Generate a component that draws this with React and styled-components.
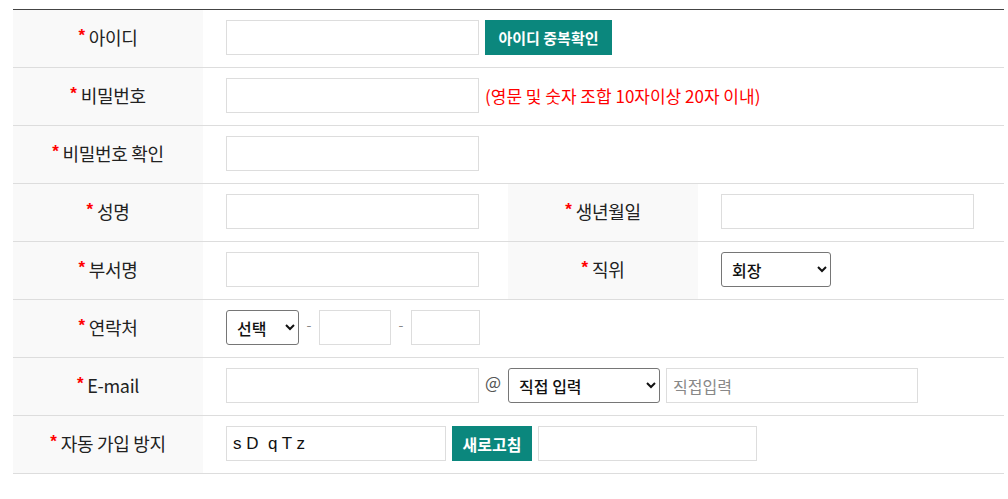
import React from "react";
import styled, { createGlobalStyle } from "styled-components";

const GlobalStyle = createGlobalStyle`
  html, body {
    margin: 0;
    padding: 0;
    background: #fff;
  }
  body {
    font-family: "Noto Sans CJK KR", "Noto Sans", sans-serif;
    color: #333;
  }
`;

const Wrap = styled.div`
  padding: 9px 4px 0 13px;
`;

const Table = styled.table`
  width: 991px;
  border-collapse: collapse;
  table-layout: fixed;
  border-top: 1px solid #444;
`;

const Row = styled.tr`
  border-bottom: 1px solid #ddd;
`;

const Th = styled.th`
  background: #f9f9f9;
  font-size: 18px;
  font-weight: 400;
  color: #222;
  line-height: 24px;
  text-align: center;
  vertical-align: middle;
  padding: 0;
  letter-spacing: -0.3px;
`;

const Star = styled.span`
  color: #f00;
  font-family: "Liberation Sans", sans-serif;
  font-weight: 700;
  font-size: 17px;
  position: relative;
  top: -4px;
  margin-right: 4px;
`;

const Td = styled.td`
  padding: 10px 0 12px 23px;
  vertical-align: middle;
`;

const Field = styled.div`
  display: flex;
  align-items: center;
  gap: ${(p) => p.$gap || 6}px;
  height: 35px;
`;

const Input = styled.input`
  box-sizing: border-box;
  width: ${(p) => p.$w || 253}px;
  height: 35px;
  border: 1px solid #ddd;
  padding: 0 6px;
  margin: 0;
  font-family: "Noto Sans CJK KR", sans-serif;
  font-size: 16px;
  color: #222;
  outline: none;
  &::placeholder {
    color: #888;
  }
`;

const Captcha = styled(Input)`
  font-family: "Liberation Sans", sans-serif;
  font-size: 17px;
  color: #111;
`;

const Select = styled.select`
  box-sizing: border-box;
  width: ${(p) => p.$w}px;
  height: 35px;
  border: 1px solid #767676;
  border-radius: 3px;
  padding: 0 4px 0 6px;
  margin: 0;
  background: #fff;
  font-family: "Noto Sans CJK KR", sans-serif;
  font-size: 16px;
  font-weight: 500;
  color: #111;
`;

const Button = styled.button`
  box-sizing: border-box;
  height: 35px;
  width: ${(p) => p.$w}px;
  border: 0;
  margin: 0;
  background: #0b877d;
  color: #fff;
  font-family: "Noto Sans CJK KR", sans-serif;
  font-size: ${(p) => p.$size || 15}px;
  font-weight: 700;
  padding: 0;
  cursor: pointer;
`;

const Hint = styled.span`
  color: #f00;
  font-size: 17px;
  line-height: 22px;
`;

const Sep = styled.span`
  width: 6px;
  text-align: center;
  color: #888;
  font-size: 14px;
  margin-top: -8px;
`;

const At = styled.span`
  color: #555;
  font-size: 17px;
  margin-top: -8px;
  margin-right: 1px;
`;

function Label({ children }) {
  return (
    <Th>
      <Star>*</Star>
      {children}
    </Th>
  );
}

export default function App() {
  return (
    <>
      <GlobalStyle />
      <Wrap>
        <Table>
          <colgroup>
            <col style={{ width: 190 }} />
            <col style={{ width: 305 }} />
            <col style={{ width: 190 }} />
            <col style={{ width: 306 }} />
          </colgroup>
          <tbody>
            <Row>
              <Label>아이디</Label>
              <Td colSpan={3}>
                <Field>
                  <Input />
                  <Button $w={127}>아이디 중복확인</Button>
                </Field>
              </Td>
            </Row>
            <Row>
              <Label>비밀번호</Label>
              <Td colSpan={3}>
                <Field>
                  <Input type="password" />
                  <Hint>(영문 및 숫자 조합 10자이상 20자 이내)</Hint>
                </Field>
              </Td>
            </Row>
            <Row>
              <Label>비밀번호 확인</Label>
              <Td colSpan={3}>
                <Field>
                  <Input type="password" />
                </Field>
              </Td>
            </Row>
            <Row>
              <Label>성명</Label>
              <Td>
                <Field>
                  <Input />
                </Field>
              </Td>
              <Label>생년월일</Label>
              <Td>
                <Field>
                  <Input />
                </Field>
              </Td>
            </Row>
            <Row>
              <Label>부서명</Label>
              <Td>
                <Field>
                  <Input />
                </Field>
              </Td>
              <Label>직위</Label>
              <Td>
                <Field>
                  <Select $w={110} defaultValue="회장">
                    <option>회장</option>
                    <option>사장</option>
                    <option>부장</option>
                  </Select>
                </Field>
              </Td>
            </Row>
            <Row>
              <Label>연락처</Label>
              <Td colSpan={3}>
                <Field $gap={7}>
                  <Select $w={73} defaultValue="선택">
                    <option>선택</option>
                    <option>010</option>
                    <option>011</option>
                  </Select>
                  <Sep>-</Sep>
                  <Input $w={72} />
                  <Sep>-</Sep>
                  <Input $w={69} />
                </Field>
              </Td>
            </Row>
            <Row>
              <Label>E-mail</Label>
              <Td colSpan={3}>
                <Field>
                  <Input />
                  <At>@</At>
                  <Select $w={152} defaultValue="직접 입력">
                    <option>직접 입력</option>
                    <option>naver.com</option>
                    <option>gmail.com</option>
                  </Select>
                  <Input $w={252} placeholder="직접입력" />
                </Field>
              </Td>
            </Row>
            <Row>
              <Label>자동 가입 방지</Label>
              <Td colSpan={3}>
                <Field>
                  <Captcha $w={220} defaultValue="s D  q T z" readOnly />
                  <Button $w={80} $size={16}>새로고침</Button>
                  <Input $w={219} />
                </Field>
              </Td>
            </Row>
          </tbody>
        </Table>
      </Wrap>
    </>
  );
}
